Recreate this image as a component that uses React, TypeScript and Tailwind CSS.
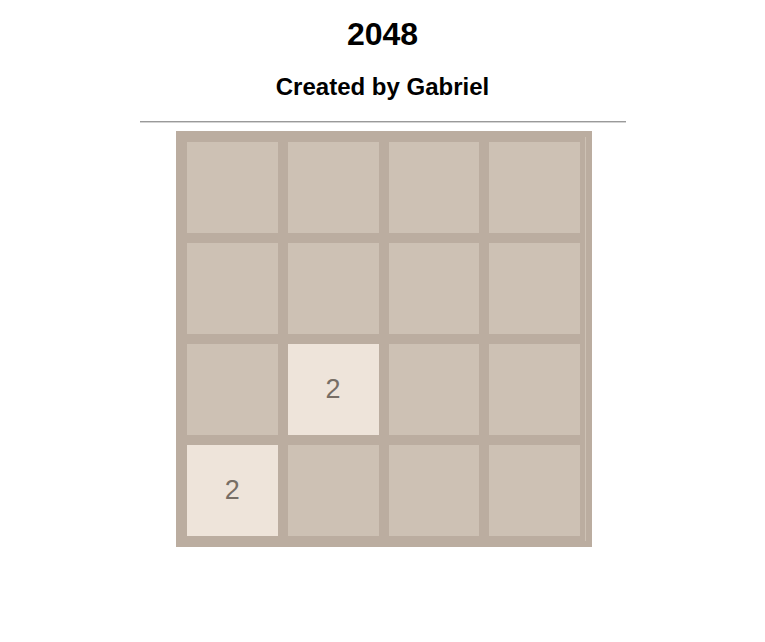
const board: number[][] = [
  [0, 0, 0, 0],
  [0, 0, 0, 0],
  [0, 2, 0, 0],
  [2, 0, 0, 0],
];

function Tile({ value }: { value: number }) {
  if (!value) {
    return <div className="m-[5px] h-[91px] w-[90.75px] bg-[#cdc1b4]" />;
  }
  return (
    <div className="m-[5px] flex h-[91px] w-[90.75px] items-center justify-center bg-[#eee4da] text-[27px] text-[#776e65]">
      {value}
    </div>
  );
}

export default function App() {
  return (
    <div className="flex min-h-[642px] flex-col items-center bg-white font-['Liberation_Sans',Arial,sans-serif] text-black">
      <h1 className="mt-[16px] text-[32px] font-bold leading-[37px]">2048</h1>
      <h2 className="mt-[20px] text-[24px] font-bold leading-[28px]">Created by Gabriel</h2>
      <hr className="mt-[20px] h-[2px] w-[486px] border-t border-b border-t-[#9a9a9a] border-b-[#d4d4d4]" />

      <div className="mt-[8px] ml-[3px] flex h-[416px] w-[416px] bg-[#bbada0] p-[6px]">
        <div className="flex flex-col">
          {board.map((row, r) => (
            <div className="flex" key={r}>
              {row.map((v, c) => (
                <Tile value={v} key={c} />
              ))}
            </div>
          ))}
        </div>
        <div className="w-px bg-[#cdc1b4]" />
      </div>
    </div>
  );
}
